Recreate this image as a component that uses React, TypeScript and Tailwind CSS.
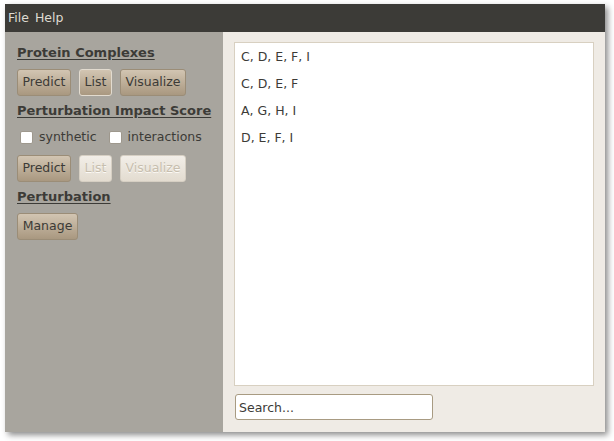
import React from 'react'

const font = { fontFamily: '"DejaVu Sans", Verdana, sans-serif' }

interface GtkButtonProps {
  label: string
  disabled?: boolean
  focused?: boolean
  className?: string
}

function GtkButton(props: GtkButtonProps) {
  if (props.disabled) {
    return (
      <button
        disabled
        className={`h-[27px] rounded-[3px] border border-[#d6cfc3] bg-gradient-to-b from-[#f2eee8] to-[#e3dcd0] px-[4px] text-[12.5px] text-[#c7beae] [text-shadow:0_1px_0_#fbf9f5] ${props.className ?? ''}`}
      >
        {props.label}
      </button>
    )
  }
  return (
    <button
      className={`h-[27px] rounded-[3px] border bg-gradient-to-b from-[#d2c5b2] to-[#a99880] px-[4px] text-[12.5px] text-[#3c3b37] ${
        props.focused ? 'border-[#e2dbcf]' : 'border-[#9b8d77]'
      } ${props.className ?? ''}`}
    >
      {props.label}
    </button>
  )
}

function Heading(props: { children: React.ReactNode; className?: string }) {
  return (
    <div
      className={`whitespace-nowrap text-[13px] font-bold leading-[16px] text-[#3c3b37] underline underline-offset-[2px] ${props.className ?? ''}`}
    >
      {props.children}
    </div>
  )
}

function Check(props: { label: string }) {
  return (
    <label className="flex items-center gap-[6px]">
      <span className="h-[13px] w-[13px] rounded-[2px] border border-[#9e988d] bg-white" />
      <span>{props.label}</span>
    </label>
  )
}

const complexes = ['C, D, E, F, I', 'C, D, E, F', 'A, G, H, I', 'D, E, F, I']

export default function App() {
  return (
    <div className="h-[441px] w-[614px] bg-white pl-[5px] pt-[4px]" style={font}>
      <div className="flex h-[428px] w-[600px] flex-col shadow-[3px_3px_6px_rgba(0,0,0,0.45)]">
        <div className="flex h-[28px] items-center gap-[6px] bg-[#3c3b37] px-[3px] text-[12.5px] text-[#dfdbd2]">
          <span>File</span>
          <span>Help</span>
        </div>
        <div className="flex flex-1">
          <div className="flex w-[218px] flex-col bg-[#a8a59e] px-[12px] pt-[13px] text-[12.5px] text-[#3c3b37]">
            <Heading>Protein Complexes</Heading>
            <div className="mt-[8px] flex gap-[8px]">
              <GtkButton label="Predict" className="w-[54px]" />
              <GtkButton label="List" focused className="w-[33px]" />
              <GtkButton label="Visualize" className="w-[66px]" />
            </div>
            <Heading className="mt-[7px]">Perturbation Impact Score</Heading>
            <div className="mt-[10px] flex h-[16px] items-center gap-[12px] pl-[3px]">
              <Check label="synthetic" />
              <Check label="interactions" />
            </div>
            <div className="mt-[10px] flex gap-[8px]">
              <GtkButton label="Predict" className="w-[54px]" />
              <GtkButton label="List" disabled className="w-[33px]" />
              <GtkButton label="Visualize" disabled className="w-[66px]" />
            </div>
            <Heading className="mt-[7px]">Perturbation</Heading>
            <div className="mt-[8px] flex">
              <GtkButton label="Manage" className="w-[61px]" />
            </div>
          </div>
          <div className="flex flex-1 flex-col bg-[#efebe5] px-[11px] pb-[12px] pt-[10px]">
            <div className="flex-1 border border-[#d8d0c1] bg-white px-[6px] text-[12.5px] text-[#3c3b37]">
              {complexes.map((c, i) => (
                <div key={i} className="h-[27px] leading-[27px]">
                  {c}
                </div>
              ))}
            </div>
            <input
              className="mt-[8px] ml-[1px] h-[26px] w-[198px] rounded-[3px] border border-[#a89b82] bg-white px-[3px] text-[12.5px] text-[#3c3b37] outline-none placeholder:text-[#3c3b37]"
              placeholder="Search..."
              style={font}
            />
          </div>
        </div>
      </div>
    </div>
  )
}
